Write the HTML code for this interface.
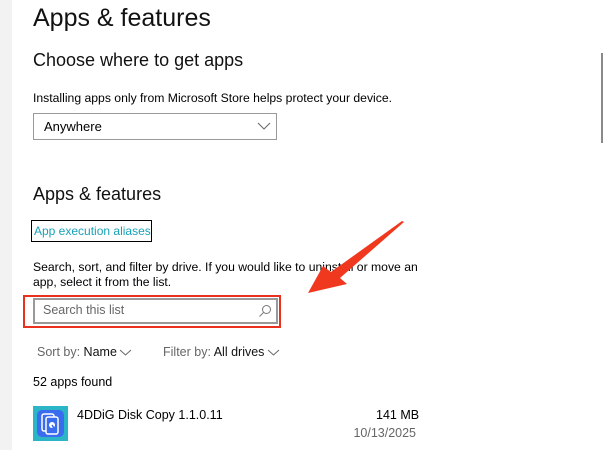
<!DOCTYPE html>
<html><head><meta charset="utf-8"><style>
*{margin:0;padding:0;box-sizing:border-box}
body{width:604px;height:450px;overflow:hidden;background:#fff;font-family:"Liberation Sans",sans-serif;color:#000;position:relative}
.a{position:absolute;white-space:nowrap}
</style></head><body>
<div class="a" style="left:0;top:0;width:12px;height:450px;background:#f2f2f2"></div>
<div class="a" style="left:601px;top:53px;width:2px;height:90px;background:#8a8a8a"></div>
<div class="a" style="left:33px;top:4px;font-size:25px;color:#111">Apps &amp; features</div>
<div class="a" style="left:33px;top:50px;font-size:18px;color:#111">Choose where to get apps</div>
<div class="a" style="left:33px;top:91px;font-size:12.2px">Installing apps only from Microsoft Store helps protect your device.</div>
<div class="a" style="left:33px;top:113px;width:244px;height:27px;border:1px solid #999"></div>
<div class="a" style="left:44px;top:119px;font-size:13px">Anywhere</div>
<svg class="a" style="left:257px;top:122px" width="14" height="8"><path d="M1 1 L7 7 L13 1" fill="none" stroke="#666" stroke-width="1"/></svg>
<div class="a" style="left:33px;top:184px;font-size:18px;color:#111">Apps &amp; features</div>
<div class="a" style="left:31px;top:220px;width:121px;height:22px;border:1.5px solid #000"></div>
<div class="a" style="left:34px;top:224px;font-size:12px;color:#17a2b8">App execution aliases</div>
<div class="a" style="left:33px;top:260px;font-size:12.2px;line-height:15px">Search, sort, and filter by drive. If you would like to uninstall or move an<br>app, select it from the list.</div>
<div class="a" style="left:23px;top:295px;width:258px;height:33px;border:2px solid #e8321f"></div>
<div class="a" style="left:33px;top:298px;width:245px;height:26px;border:2px solid #999;background:#fff"></div>
<div class="a" style="left:43px;top:303px;font-size:12.5px;color:#666">Search this list</div>
<svg class="a" style="left:258px;top:304px" width="14" height="14"><circle cx="8.5" cy="5.5" r="4" fill="none" stroke="#777" stroke-width="1"/><path d="M5.5 8.5 L1.5 12.5" stroke="#777" stroke-width="1"/></svg>
<div class="a" style="left:37px;top:345px;font-size:12.5px;color:#666">Sort by: <span style="color:#111">Name</span></div>
<svg class="a" style="left:119px;top:349px" width="13" height="7"><path d="M1 1 L6.5 6 L12 1" fill="none" stroke="#666"/></svg>
<div class="a" style="left:163px;top:345px;font-size:12.5px;color:#666">Filter by: <span style="color:#111">All drives</span></div>
<svg class="a" style="left:267px;top:349px" width="13" height="7"><path d="M1 1 L6.5 6 L12 1" fill="none" stroke="#666"/></svg>
<div class="a" style="left:33px;top:375px;font-size:12.5px">52 apps found</div>
<svg class="a" style="left:33px;top:406px" width="35" height="35"><rect width="35" height="35" fill="#2bb5c7"/><rect x="4" y="4" width="27" height="27" rx="5" fill="#3a6cf0"/><rect x="9" y="8" width="12" height="17" rx="2" fill="none" stroke="#fff" stroke-width="1.5"/><rect x="13" y="11" width="12" height="17" rx="2" fill="#3a6cf0" stroke="#fff" stroke-width="1.5"/><circle cx="19" cy="19" r="3" fill="#fff"/><path d="M19 19 L22 24" stroke="#3a6cf0" stroke-width="1.5"/></svg>
<div class="a" style="left:77px;top:408px;font-size:12.5px">4DDiG Disk Copy 1.1.0.11</div>
<div class="a" style="left:376px;top:408px;width:40px;text-align:right;font-size:12.5px">141 MB</div>
<div class="a" style="left:346px;top:426px;width:70px;text-align:right;font-size:12.5px;color:#666">10/13/2025</div>
<svg class="a" style="left:0;top:0" width="604" height="450"><polygon points="404,222 340,278 347,284 308,293 323,266 331,272 402,221" fill="#f0381e"/></svg>
</body></html>
